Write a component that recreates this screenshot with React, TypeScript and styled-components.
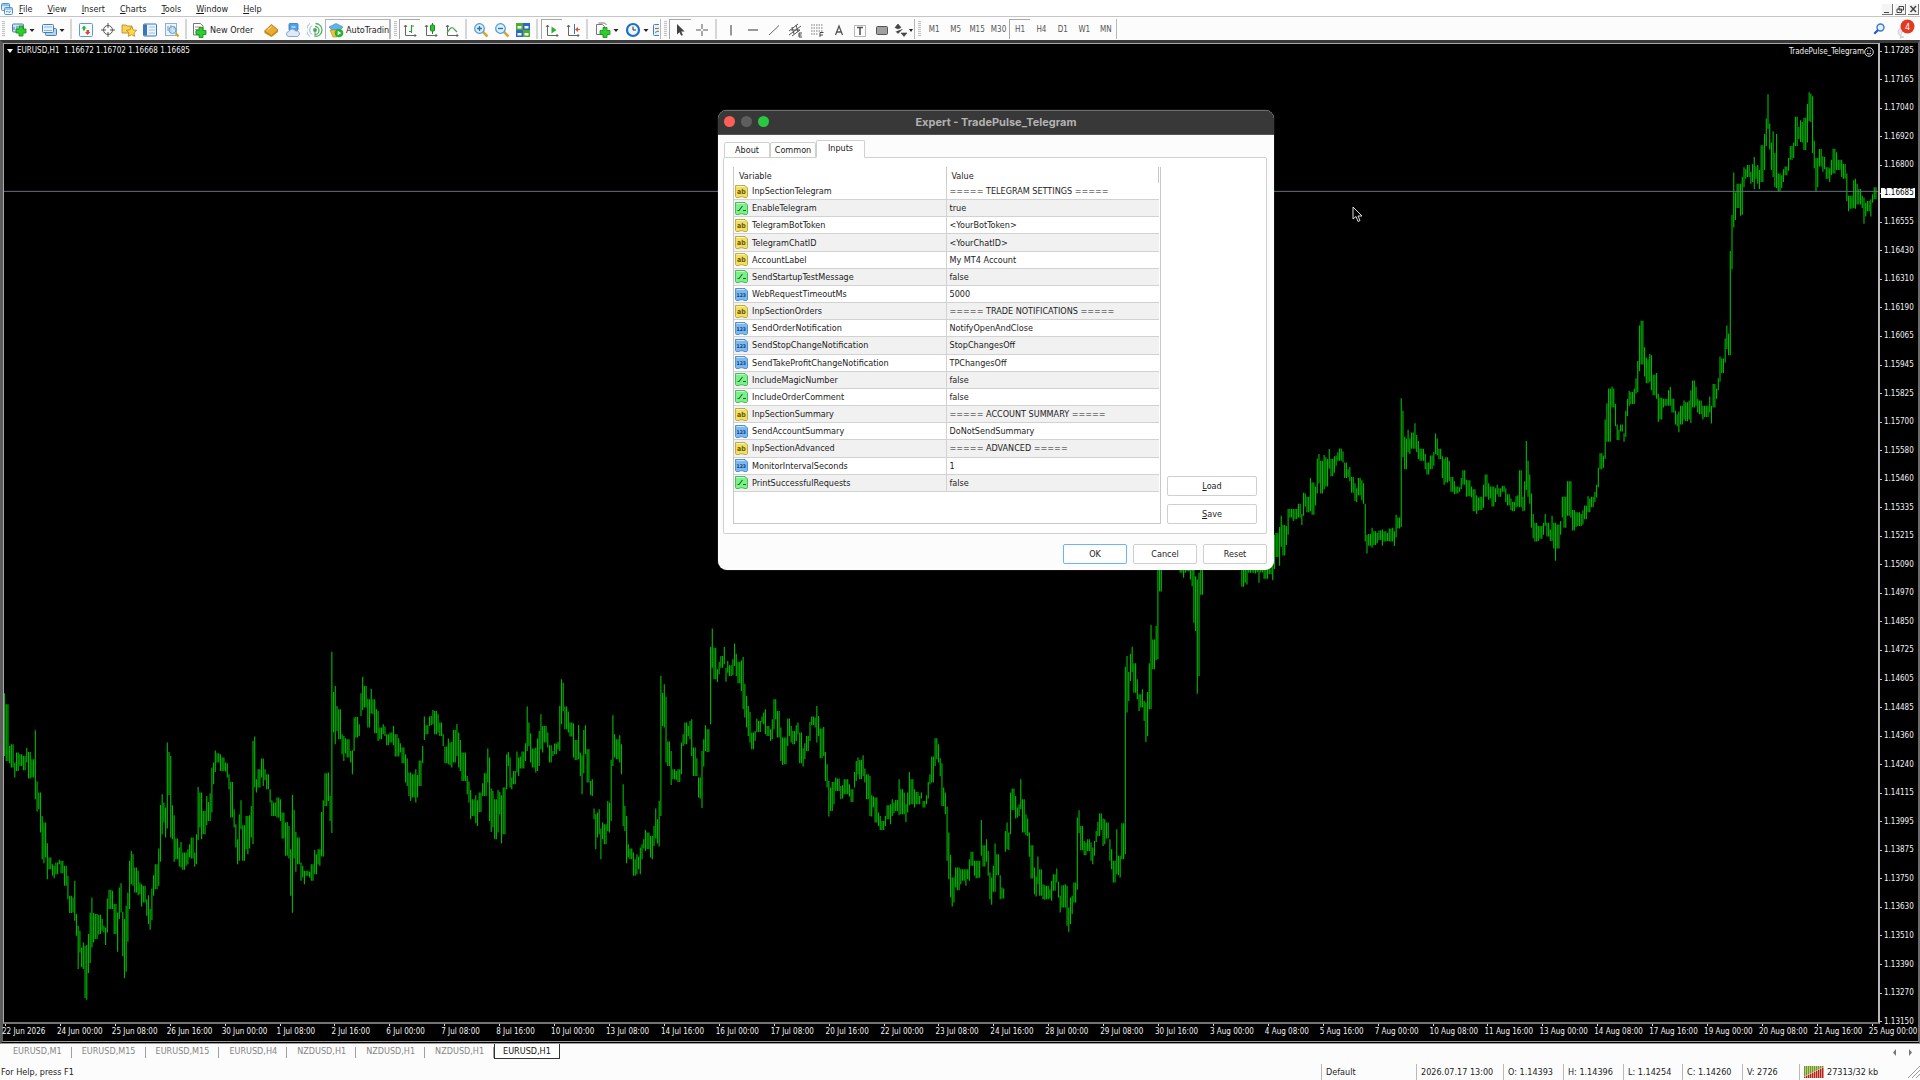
import React from 'react';
import styled, { createGlobalStyle } from 'styled-components';

const uiFont = '"DejaVu Sans Condensed", Tahoma, "DejaVu Sans", sans-serif';

const GlobalStyle = createGlobalStyle`
  *, *::before, *::after { box-sizing: border-box; }
  html, body, #root { height: 100%; }
  body {
    margin: 0;
    overflow: hidden;
    background: #fcfcfc;
    color: #1c1c1c;
    font: 9px/12px ${uiFont};
  }
  button { font: inherit; color: inherit; margin: 0; padding: 0; border: 0; background: none; }
  svg { display: block; }
`;

/* ---------- price series ---------- */

type Block = { x: number; y: number; ux: number; uy: number; bars: string };

// Each block lists "time high low" triples in its own units.
const blocks: Block[] = [
  {
    x: 0, y: 620, ux: 2.45, uy: 3,
    bars: `10 222 410;18 255 425;24 380 432;29 375 445;36 430 475;41 400 455;50 405 440;60 410 453;66 386 430;71 398 478;80 420 475;87 333 540;91 487 577;96 520 570;100 520 640;105 590 720;109 610 732;113 610 715;117 672 780;122 715 750;127 735 770;132 740 777;138 730 765;146 722 735;150 725 762;155 725 762;160 740 800;166 770 840;172 830 882;178 835 880;183 785 905;188 885 950;192 920 1050;197 935 1000;202 985 1045;205 970 1050;210 980 1137;213 978 1142;217 945 1062;222 880 1032;226 835 985;230 882 970;235 885 960;241 887 947;247 887 945;252 900 935;256 920 940;260 925 978;264 838 940;270 812 870;276 815 870;282 855 945;289 880 998;293 805 900;297 792 880;301 878 1012;306 900 1078;309 860 1058;313 820 968;318 725 870;322 695 795;327 705 800;333 745 820;338 755 828;343 790 825;348 795 862;353 800 850;358 840 890;364 828 915;368 870 932;373 808 903;378 768 830;383 735 810;389 688 800;393 557 728;398 525 645;403 550 610;406 565 655;410 370 628;415 398 527;419 410 655;424 558 660;428 588 728;433 658 720;440 685 742;444 668 745;449 700 752;455 700 740;460 690 735;465 675 715;470 655 718;477 700 743;482 645 735;487 503 662;492 520 625;495 560 660;500 575 645;507 530 618;511 548 605;516 522 605;520 445 580;525 430 495;528 394 458;533 402 430;539 405 455;545 415 455;552 430 457;558 432 475;563 465 510;567 488 595;573 570 625;578 615 685;583 660 735;588 585 725;591 543 630;596 618 725;602 590 690;607 590 705;612 588 688;617 560 655;621 365 675;625 352 505;629 480 520;635 450 505;640 418 475;645 418 500;650 450 483;655 465 510;662 510 550;667 543 590;673 550 590;680 535 595;686 540 605;692 580 658;700 610 710;705 608 710;710 620 718;713 690 830;717 527 881;722 572 718;726 638 758;731 655 735;738 730 785;743 740 775;747 755 795;753 755 770;760 758 775;764 735 785;770 692 765;776 705 765;781 690 735;785 690 740;790 578 712;794 543 675;798 462 560;803 460 545;807 530 605;811 505 605;814 97 641;819 218 340;822 200 375;827 260 335;832 270 360;837 345 405;842 350 425;848 357 403;853 360 415;858 395 430;863 393 465;868 295 395;874 293 355;879 315 350;885 222 290;890 172 272;895 200 265;900 238 325;905 240 325;911 208 283;916 240 285;920 270 342;926 275 365;932 325 360;938 315 345;944 322 350;950 345 378;957 340 370;964 320 378;970 345 412;976 357 412;982 372 400;988 385 432;993 405 490;998 418 500;1003 460 530;1007 460 545;1013 465 535;1019 450 550;1025 467 535;1029 424 500;1034 380 432;1040 292 362;1046 318 345;1051 292 320;1057 290 318;1061 272 315;1067 275 345;1074 285 340;1080 310 350;1086 345 380;1092 382 432;1098 358 435;1103 370 438;1108 368 445;1113 332 430;1119 314 410;1124 340 445;1129 362 455;1134 400 485;1140 400 485;1145 470 525;1150 487 550;1154 512 600;1160 540 590;1166 528 612;1171 543 620;1176 520 578;1182 492 530;1188 462 530;1195 388 490;1200 415 605;1205 508 638;1209 515 625;1213 540 660;1221 512 640;1226 518 585;1230 528 672;1235 505 645;1240 405 510;1246 398 440;1251 415 505;1255 475 510;1261 455 495;1266 397 460;1271 415 470;1276 412 448;1281 397 448;1287 372 425;1293 262 395;1297 310 380;1301 342 430;1306 388 445;1311 385 460;1316 358 455;1321 335 440;1326 285 390;1331 320 400;1336 320 370;1342 340 385;1348 378 430;1354 395 410;1360 373 405;1367 368 390;1371 260 395;1377 180 315;1381 190 275;1386 262 330;1393 277 340;1400 310 352;1405 312 415;1411 362 422;1417 317 420;1422 400 470;1427 408 525;1432 332 462;1436 318 405;1441 390 490;1447 485 528;1452 480 530;1456 568 600;1460 585 690;1464 580 655;1469 570 645;1473 628 720;1478 610 660;1482 615 675;1488 545 635;1494 550 640;1499 422 605;1502 288 440;1507 345 415;1512 360 420;1517 348 430;1523 375 465;1528 495 620;1532 560 635;1536 590 732;1541 675 715;1546 688 720;1550 700 745;1554 720 770;1560 705 765;1565 712 750`,
  },
  {
    x: 640, y: 560, ux: 2.45, uy: 3,
    bars: `1 865 945;5 855 900;10 840 868;14 812 875;20 820 870;25 830 895;30 830 900;33 800 860;37 748 838;42 780 853;47 725 862;52 349 770;57 400 500;61 375 505;65 412 610;70 547 620;75 575 665;78 585 677;83 630 660;90 635 662;95 630 668;100 550 645;105 525 560;112 490 555;118 500 530;124 485 540;128 480 590;133 565 650;138 597 650;143 655 715;148 655 718;153 575 746;157 540 622;162 498 575;167 510 578;173 262 495;178 207 325;183 265 360;189 330 368;195 308 345;200 290 325;205 263 315;211 325 367;216 305 340;221 318 350;227 300 348;232 252 320;237 283 350;243 308 372;249 303 395;254 293 450;258 373 475;263 410 505;266 440 530;270 458 550;275 520 570;281 515 545;287 478 518;293 485 518;298 472 490;303 460 495;308 450 525;313 500 530;319 510 545;325 480 540;329 420 510;334 420 480;339 455 535;345 505 605;350 535 617;356 535 615;361 478 560;366 478 530;371 500 550;377 515 555;383 498 545;388 490 525;393 520 612;400 567 622;405 552 600;410 530 575;415 488 545;423 472 497;428 475 505;434 440 550;438 470 530;443 508 597;450 503 590;455 578 665;460 615 685;464 665 772;469 685 755;473 668 735;480 655 695;485 658 695;491 680 720;497 678 718;503 660 705;508 660 705;514 675 712;519 690 728;525 638 685;530 605 665;535 595 645;540 602 660;546 588 650;552 628 670;558 645 720;563 650 770;568 708 772;573 712 745;578 715 790;583 760 800;589 770 812;595 785 812;601 770 800;607 738 780;613 735 795;617 720 770;623 730 762;629 722 755;636 660 768;641 690 765;646 700 765;650 735 788;656 700 760;661 638 738;666 660 735;672 690 745;678 698 735;684 710 735;690 700 718;697 725 745;702 708 735;707 668 718;712 645 675;717 592 670;721 570 620;725 537 600;730 555 610;735 597 650;740 612 740;745 685 740;750 700 765;754 742 905;758 820 960;762 887 1015;766 955 1042;770 955 1030;775 925 985;780 925 993;786 930 975;792 930 965;797 930 980;803 930 960;808 900 965;814 878 920;820 905 950;826 905 957;831 905 955;837 782 890;842 858 922;849 840 908;853 875 950;858 940 1020;863 955 1037;868 920 998;871 853 950;876 885 948;881 948 1020;886 985 1018;892 988 1018;895 815 878;899 790 870;904 820 872;909 700 825;914 688 752;920 710 778;926 745 775;930 735 770;934 660 750;939 720 820;944 765 828;949 778 830;954 820 893;960 858 958;966 925 1005;971 952 1012;976 892 975;981 930 1010;986 975 1020;992 978 1022;998 980 1020;1005 990 1018;1010 965 1025;1015 945 995;1021 928 970;1026 968 1015;1031 1010 1060;1036 978 1045;1042 975 1045;1047 980 1100;1051 1045 1118;1056 1015 1095;1060 1010 1065;1065 970 1030;1070 885 992;1073 775 905;1077 753 822;1082 800 873;1088 845 888;1093 850 888;1098 840 875;1104 850 905;1108 865 915;1114 845 890;1119 815 848;1124 788 830;1128 763 812;1135 778 860;1140 780 855;1145 790 838;1151 840 905;1157 870 930;1161 905 970;1168 810 945;1173 890 948;1178 890 955;1183 792 900;1187 422 885;1191 322 510;1194 290 460;1199 338 425;1203 283 365;1207 262 338;1212 312 400;1217 360 420;1223 405 455;1229 405 445;1233 390 445;1237 425 485;1241 430 548;1245 398 530;1250 312 450;1254 197 355;1258 240 330;1263 200 302;1267 10 300;1271 0 68;1275 0 96;1280 -60 0;1319 -60 0;1325 0 40;1331 0 55;1336 0 40;1342 0 35;1348 0 60;1354 0 80;1358 0 190;1363 50 215;1367 60 403;1371 40 350;1376 0 106;1381 -40 10;1470 -40 10;1476 0 82;1482 0 70;1487 0 75;1492 0 40;1500 0 40;1508 0 42;1514 0 38;1518 0 70`,
  },
  {
    x: 1240, y: 60, ux: 2.306, uy: 2.904,
    bars: `48 1440 1490;60 1440 1508;70 1440 1495;77 1400 1512;81 1380 1480;85 1375 1445;90 1375 1455;93 1358 1470;97 1325 1415;101 1352 1440;106 1355 1410;111 1305 1380;116 1305 1330;122 1305 1340;130 1305 1335;137 1290 1330;142 1320 1352;146 1258 1325;151 1260 1298;156 1270 1315;162 1215 1312;168 1228 1322;174 1240 1295;179 1158 1260;183 1145 1230;188 1165 1260;193 1148 1248;198 1155 1240;203 1160 1240;207 1131 1188;212 1160 1210;218 1152 1200;223 1150 1180;227 1140 1165;231 1129 1165;237 1138 1170;243 1170 1215;249 1190 1212;254 1183 1225;259 1212 1258;265 1230 1282;270 1245 1285;274 1215 1265;280 1222 1280;285 1230 1290;289 1290 1400;294 1380 1435;299 1378 1412;305 1360 1418;310 1370 1410;316 1375 1405;322 1368 1395;328 1365 1412;334 1370 1400;340 1375 1398;346 1362 1400;351 1360 1400;356 1370 1413;361 1322 1388;366 1330 1362;370 1305 1358;373 983 1357;376 1020 1155;380 1095 1190;384 1100 1190;388 1075 1140;392 1100 1145;397 1083 1130;402 1056 1130;407 1090 1140;412 1108 1160;418 1130 1165;423 1130 1165;428 1145 1190;434 1170 1205;440 1150 1190;446 1140 1180;450 1086 1145;455 1100 1150;461 1130 1160;466 1152 1215;472 1160 1235;477 1155 1228;483 1165 1225;488 1212 1255;494 1225 1262;500 1240 1260;506 1242 1255;511 1215 1248;517 1193 1235;523 1220 1270;528 1222 1268;534 1240 1272;540 1248 1312;545 1265 1320;550 1272 1310;556 1270 1308;561 1235 1302;567 1205 1270;573 1230 1278;578 1240 1275;583 1240 1298;589 1245 1285;594 1235 1262;600 1245 1270;607 1238 1255;613 1245 1285;619 1262 1295;625 1275 1308;630 1285 1312;636 1268 1300;641 1265 1298;646 1193 1300;651 1270 1312;656 1225 1310;659 1108 1250;664 1165 1270;669 1205 1290;673 1260 1360;677 1320 1390;682 1345 1400;687 1355 1398;693 1355 1392;699 1345 1380;705 1320 1355;710 1345 1385;716 1365 1398;721 1325 1398;726 1345 1420;728 1370 1456;733 1350 1420;738 1340 1380;744 1270 1330;749 1270 1360;754 1225 1325;759 1225 1325;764 1225 1330;769 1308 1368;774 1315 1358;780 1315 1355;786 1320 1355;792 1310 1350;797 1295 1335;802 1268 1315;807 1275 1315;812 1270 1300;818 1255 1285;823 1235 1272;828 1185 1242;832 1143 1190;838 1150 1185;843 1045 1160;848 998 1110;852 955 1110;856 950 1010;861 955 1010;866 1000 1065;870 1060 1105;875 1075 1105;880 1060 1080;884 1085 1110;889 1020 1095;893 985 1035;898 962 1005;903 965 1000;908 955 1000;913 925 970;918 875 965;922 772 905;927 758 885;932 835 920;937 865 940;942 870 940;946 855 935;950 858 960;955 915 975;960 910 985;965 970 1052;970 982 1045;976 985 1010;982 985 1005;988 960 1005;993 950 1005;998 985 1025;1004 1020 1060;1009 1030 1065;1013 1022 1082;1019 1005 1060;1025 990 1045;1030 995 1050;1036 990 1045;1041 960 1055;1046 932 1010;1051 950 1005;1056 985 1025;1062 990 1030;1068 1005 1045;1074 1005 1038;1080 1005 1038;1085 978 1025;1089 1005 1057;1093 942 1010;1098 955 985;1103 925 960;1108 862 935;1113 868 910;1118 810 880;1124 772 840;1129 795 858;1132 555 835;1136 450 608;1139 327 487;1143 385 465;1148 360 430;1153 360 453;1157 340 450;1161 312 370;1166 318 345;1172 305 340;1177 325 360;1182 303 355;1186 282 375;1190 310 345;1195 305 360;1199 320 375;1204 248 355;1209 215 320;1213 170 250;1217 100 200;1221 185 260;1226 240 320;1231 207 340;1235 270 370;1239 215 372;1243 330 382;1249 335 372;1254 318 355;1260 310 335;1266 285 322;1271 250 290;1277 240 285;1283 165 250;1288 195 230;1294 175 238;1298 180 240;1303 168 262;1307 128 240;1311 94 178;1315 98 180;1319 105 195;1322 150 270;1326 235 315;1330 285 384;1334 285 370;1338 259 310;1343 280 325;1348 282 318;1354 312 345;1360 315 355;1365 290 335;1370 258 330;1376 268 320;1382 290 320;1388 290 340;1394 302 345;1398 330 410;1403 395 440;1409 395 432;1414 350 430;1419 345 432;1424 360 420;1429 375 420;1434 395 430;1438 400 476;1444 415 455;1449 410 440;1454 405 455;1459 390 415;1464 370 405`,
  },
];

const samples = blocks.flatMap((b) =>
  b.bars.split(';').map((t) => {
    const [x, hi, lo] = t.split(' ').map(Number);
    return [b.x + x / b.ux, b.y + hi / b.uy, b.y + lo / b.uy];
  }),
);

const BAR_STEP = 1.7138;

// A bar spans every sample that falls in its step, or takes the nearest one.
const seriesPath = (() => {
  let d = '';
  for (let x = 4.5; x < 1876; x += BAR_STEP) {
    const inside = samples.filter((s) => Math.abs(s[0] - x) <= BAR_STEP / 2);
    const used = inside.length
      ? inside
      : [samples.reduce((a, s) => (Math.abs(s[0] - x) < Math.abs(a[0] - x) ? s : a))];
    const hi = Math.min(...used.map((s) => s[1]));
    const lo = Math.max(...used.map((s) => s[2]));
    d += `M${x.toFixed(2)} ${hi.toFixed(1)}V${lo.toFixed(1)}`;
  }
  return d;
})();

const prices = ['1.17285', '1.17165', '1.17040', '1.16920', '1.16800', '', '1.16555', '1.16430', '1.16310', '1.16190', '1.16065', '1.15945', '1.15825', '1.15700', '1.15580', '1.15460', '1.15335', '1.15215', '1.15090', '1.14970', '1.14850', '1.14725', '1.14605', '1.14485', '1.14360', '1.14240', '1.14115', '1.13995', '1.13875', '1.13750', '1.13630', '1.13510', '1.13390', '1.13270', '1.13150'];

const dates = ['22 Jun 2026', '24 Jun 00:00', '25 Jun 08:00', '26 Jun 16:00', '30 Jun 00:00', '1 Jul 08:00', '2 Jul 16:00', '6 Jul 00:00', '7 Jul 08:00', '8 Jul 16:00', '10 Jul 00:00', '13 Jul 08:00', '14 Jul 16:00', '16 Jul 00:00', '17 Jul 08:00', '20 Jul 16:00', '22 Jul 00:00', '23 Jul 08:00', '24 Jul 16:00', '28 Jul 00:00', '29 Jul 08:00', '30 Jul 16:00', '3 Aug 00:00', '4 Aug 08:00', '5 Aug 16:00', '7 Aug 00:00', '10 Aug 08:00', '11 Aug 16:00', '13 Aug 00:00', '14 Aug 08:00', '17 Aug 16:00', '19 Aug 00:00', '20 Aug 08:00', '21 Aug 16:00', '25 Aug 00:00'];

/* ---------- shell ---------- */

const Shell = styled.div`
  display: flex;
  flex-direction: column;
  height: 100vh;
`;

const MenuBar = styled.nav`
  display: flex;
  align-items: center;
  height: 16px;
  padding: 2px 1px 0;
  flex: none;
  background: #fff;
`;

const MenuList = styled.div`
  display: flex;
  gap: 15px;
  margin-left: 6px;
`;

const MenuItem = styled.button`
  white-space: nowrap;
  line-height: 14px;
`;

const Key = styled.span`
  text-decoration: underline;
`;

const WindowButtons = styled.div`
  display: flex;
  gap: 2px;
  margin-left: auto;
`;

const WindowButton = styled.button`
  width: 11px;
  height: 11px;
  background: #f4f4f4;
  border-right: 1px solid #777;
  border-bottom: 1px solid #777;
`;

const Toolbar = styled.div`
  display: flex;
  align-items: stretch;
  flex: none;
  height: 24px;
  padding: 2px 0 1px 2px;
  border-top: 1px solid #c6c6c6;
`;

const Grip = styled.span`
  flex: none;
  width: 3px;
  margin: 2px 2px 2px 0;
  background: repeating-linear-gradient(#c4c4c4 0 1px, #f4f4f4 1px 2px);
`;

const Divider = styled.span`
  flex: none;
  width: 2px;
  margin: 0 3px;
  background: #d6d6d6;
`;

const Edge = styled.span`
  flex: none;
  width: 1px;
  margin-right: 3px;
  background: #b8b8b8;
`;

const ToolGroup = styled.div<{ $w: number }>`
  display: flex;
  flex: none;
  width: ${(p) => p.$w}px;
`;

const Tool = styled.button<{ $on?: boolean }>`
  display: flex;
  flex: 1 1 0;
  min-width: 0;
  align-items: center;
  justify-content: center;
  color: #555;
  font-size: 8px;
  border-left: 1px solid ${(p) => (p.$on ? '#a8a8a8' : 'transparent')};
  border-top: 1px solid ${(p) => (p.$on ? '#a8a8a8' : 'transparent')};
  overflow: hidden;
`;

const LabelTool = styled.button<{ $w: number; $boxed?: boolean }>`
  display: flex;
  flex: none;
  align-items: center;
  gap: ${(p) => (p.$boxed ? 2 : 3)}px;
  width: ${(p) => p.$w}px;
  padding-left: ${(p) => (p.$boxed ? 2 : 0)}px;
  overflow: hidden;
  white-space: nowrap;
  border: 1px solid ${(p) => (p.$boxed ? '#b4b4b4' : 'transparent')};
  border-bottom: 0;
  svg { flex: none; }
`;

const Spacer = styled.span`
  flex: 1;
`;

const ToolbarEnd = styled.div`
  display: flex;
  align-items: center;
  gap: 10px;
  padding-right: 5px;
`;

/* ---------- chart ---------- */

const ChartWindow = styled.main`
  display: grid;
  flex: 1;
  min-height: 0;
  grid-template-columns: minmax(0, 1fr) 38px;
  grid-template-rows: minmax(0, 1fr) 17px;
  border: 2px solid #6b6b6b;
  border-left: 3px solid #5c5c5c;
  border-top: 3px solid #3a3a3a;
  border-bottom: 3px double #9a9a9a;
  background: #000;
  color: #f2f2f2;
  font-size: 8px;
  line-height: 10px;
`;

const Plot = styled.section`
  position: relative;
  min-width: 0;
  border: 1px solid #a8a8a8;
  border-right: 2px solid #b8b8b8;
  border-bottom: 2px solid #747474;
  svg.series { width: 100%; height: 100%; }
`;

const PlotTitle = styled.div`
  position: absolute;
  top: 2px;
  left: 3px;
  display: flex;
  align-items: center;
  gap: 4px;
  white-space: pre;
`;

const ExpertLabel = styled.div`
  position: absolute;
  top: 3px;
  right: 4px;
  display: flex;
  align-items: center;
`;

const PriceAxis = styled.div`
  display: flex;
  flex-direction: column;
  justify-content: space-between;
  grid-row: 1 / span 2;
  grid-column: 2;
  position: relative;
  padding: 3px 0 14px;
`;

const Price = styled.div`
  display: flex;
  align-items: center;
  gap: 2px;
  height: 10px;
  &::before { content: ''; width: 2px; height: 1px; background: #ccc; }
`;

const CurrentPrice = styled.output`
  position: absolute;
  top: 15%;
  left: 1px;
  width: 34px;
  margin-top: -5px;
  padding-left: 3px;
  background: #fff;
  color: #000;
`;

const TimeAxis = styled.div`
  display: flex;
  grid-row: 2;
  grid-column: 1 / span 2;
  margin-left: 1px;
`;

const TimeMark = styled.span`
  position: relative;
  flex: 1 1 0;
  width: 0;
  padding-top: 3px;
  white-space: nowrap;
  text-indent: -2px;
  &:last-child { flex: 0 0 47px; }
  &::before { content: ''; position: absolute; left: 1px; top: 0; width: 1px; height: 2px; background: #ddd; }
`;

const ChartTabs = styled.div`
  display: flex;
  flex: none;
  height: 17px;
  padding: 0 6px 0 3px;
  color: #858585;
`;

const ChartTab = styled.button<{ $on?: boolean }>`
  height: 15px;
  padding: 0 ${(p) => (p.$on ? 8 : 10)}px 1px;
  white-space: nowrap;
  ${(p) =>
    p.$on
      ? 'color:#111;background:#fff;border:1px solid #333;border-top:0;'
      : 'background:linear-gradient(#a0a0a0,#a0a0a0) right 3px / 1px 11px no-repeat;'}
`;

const Scrollers = styled.div`
  display: flex;
  align-items: center;
  gap: 8px;
  margin-left: auto;
`;

const StatusBar = styled.footer`
  display: flex;
  align-items: center;
  flex: none;
  height: 19px;
  padding: 2px 0 0 1px;
`;

const Help = styled.span`
  flex: 1;
`;

const StatusCell = styled.span<{ $w: number }>`
  display: flex;
  align-items: center;
  gap: 3px;
  width: ${(p) => p.$w}px;
  height: 16px;
  padding-left: 4px;
  border-left: 1px solid #b8b8b8;
  white-space: nowrap;
`;

/* ---------- dialog ---------- */

const Dialog = styled.section`
  position: absolute;
  top: 110px;
  left: 718px;
  display: flex;
  flex-direction: column;
  width: 556px;
  height: 460px;
  border-radius: 9px;
  overflow: hidden;
  background: #fcfcfc;
  box-shadow: 0 0 1px #aaa;
  line-height: 14px;
`;

const TitleBar = styled.header`
  display: grid;
  grid-template-columns: 60px 1fr 60px;
  align-items: center;
  flex: none;
  height: 25px;
  padding-bottom: 2px;
  background: #383838;
  border-top: 1px solid #6e6e6e;
  border-bottom: 1px solid #555;
`;

const Lights = styled.div`
  display: flex;
  gap: 6px;
  padding-left: 6px;
`;

const Light = styled.button<{ $c: string }>`
  width: 11px;
  height: 11px;
  border-radius: 50%;
  background: ${(p) => p.$c};
`;

const DialogTitle = styled.h1`
  margin: 0;
  text-align: center;
  font: 700 11px/14px Inter, "Liberation Sans", sans-serif;
  color: #b2b2b2;
`;

const TabRow = styled.div`
  display: flex;
  align-items: flex-end;
  height: 23px;
  padding: 0 6px;
  margin-bottom: -1px;
  position: relative;
`;

const Tab = styled.button<{ $on?: boolean; $w: number }>`
  width: ${(p) => p.$w}px;
  height: ${(p) => (p.$on ? 18 : 16)}px;
  padding-bottom: ${(p) => (p.$on ? 2 : 0)}px;
  background: #fff;
  border: 1px solid #d0d0d0;
  border-bottom-color: ${(p) => (p.$on ? '#fff' : '#d0d0d0')};
  border-radius: 2px 2px 0 0;
`;

const Panel = styled.div`
  display: flex;
  flex: 1;
  gap: 6px;
  margin: 0 7px 0 5px;
  padding: 9px;
  background: #fff;
  border: 1px solid #d0d0d0;
  border-radius: 2px;
`;

const TableBox = styled.div`
  flex: 1;
  border: 1px solid #c8c8c8;
  border-top: 0;
`;

const Inputs = styled.table`
  width: calc(100% - 1px);
  height: 325px;
  table-layout: fixed;
  border-collapse: separate;
  border-spacing: 0;
  th, td { padding: 0; text-align: left; font-weight: 400; white-space: nowrap; }
  thead th { height: 16px; padding: 1px 0 0 5px; border-right: 1px solid #c8c8c8; }
  tbody th, tbody td { border-bottom: 1px solid #d2d2d2; }
  tbody th { border-right: 1px solid #d2d2d2; }
  tbody td { padding-left: 3px; }
  tbody tr:nth-child(even) { background: #f1f1f1; }
`;

const Name = styled.span`
  display: flex;
  align-items: center;
  gap: 4px;
  height: 16px;
  padding-left: 1px;
`;

const SideButtons = styled.div`
  display: flex;
  flex-direction: column;
  justify-content: flex-end;
  gap: 8px;
  width: 90px;
`;

const Push = styled.button<{ $main?: boolean }>`
  width: 100%;
  height: 20px;
  background: #fff;
  border: 1px solid ${(p) => (p.$main ? '#6ab4ff' : '#cfcfcf')};
  border-radius: 2px;
`;

const Actions = styled.div`
  display: grid;
  grid-template-columns: repeat(3, 64px);
  justify-content: end;
  gap: 6px;
  padding: 10px 7px 6px;
`;

const Pointer = styled.svg`
  position: absolute;
  top: 206px;
  left: 1352px;
`;

/* ---------- icons ---------- */

const I = ({ children, w = 16 }: { children: React.ReactNode; w?: number }) => (
  <svg width={w} height="16" viewBox={`0 0 ${w} 16`} fill="none" aria-hidden="true">{children}</svg>
);
const Caret = () => <path d="M18.500 7h5l-2.500 3z" fill="#222" />;
const Plus = ({ x = 8, y = 5 }) => (
  <path transform={`translate(${x} ${y})`} d="M3 0h4v3h3v4H7v3H3V7H0V3h3z" fill="#2fce2f" stroke="#128a18" strokeWidth=".8" />
);

const NewChart = () => (
  <I w={24}><rect x="1.500" y="2" width="11" height="8" rx="1" fill="#cfe3f7" stroke="#4a7fb5" /><path d="M3 8V5m3 3V4" stroke="#4a7fb5" /><Plus x={5} y={4} /><Caret /></I>
);
const Profiles = () => (
  <I w={24}><rect x="4.500" y="6.500" width="11" height="7" rx="1" fill="#b8d4ee" stroke="#4a7fb5" /><rect x="1.500" y="2.500" width="11" height="8" rx="1" fill="#e6f1fb" stroke="#4a7fb5" /><path d="M3 8.500h8M3 5h8" stroke="#8ab4dc" /><Caret /></I>
);
const MarketWatch = () => (
  <I><rect x="1.500" y="1.500" width="13" height="13" rx="1" fill="#f4faff" stroke="#5d9bd6" /><path d="M6 3.500 8.500 6.500H7v2H5v-2H3.500z" fill="#2fb52f" /><path d="M9.500 13 12.500 10H11V8H8.500v2H7z" fill="#e0462c" /></I>
);
const Cross = () => (
  <I><circle cx="8" cy="8" r="4.500" stroke="#555" /><path d="M8 1v5M8 10v5M1 8h5M10 8h5" stroke="#555" /></I>
);
const Favs = () => (
  <I><path d="M1 3h4l1 1h5v7H1z" fill="#f6d25a" stroke="#b9861a" strokeWidth=".8" /><path d="m10.500 4.500 1.600 3.300 3.600.5-2.600 2.500.6 3.600-3.200-1.700-3.200 1.700.6-3.600-2.600-2.500 3.600-.5z" fill="#ffd94a" stroke="#b9861a" strokeWidth=".8" /></I>
);
const DataWin = () => (
  <I><rect x="1.500" y="2" width="13" height="12" rx="1" fill="#eaf4fe" stroke="#3b77b7" /><path d="M2 2.500h3v11H2z" fill="#3b77b7" /><path d="M7 5h6M7 8h6M7 11h6" stroke="#9cc3e8" /></I>
);
const Tester = () => (
  <I><rect x="1.500" y="1.500" width="11" height="12" fill="#eef4fa" stroke="#8eb0d0" /><path d="M4 9V4m3 6V3m3 5V4" stroke="#7a9ab8" /><circle cx="8.500" cy="8" r="3.500" fill="#bfe0f8" fillOpacity=".7" stroke="#5d9bd6" /><path d="m11.500 11 3 3.500" stroke="#d6a020" strokeWidth="2" /></I>
);
const OrderIcon = () => (
  <I><path d="M2.500 1.500h7l2.500 2.500v9h-9.500z" fill="#fff" stroke="#777" /><path d="M4 5h6M4 7.500h6M4 10h3" stroke="#999" /><Plus x={5} y={5.5} /></I>
);
const Book = () => (
  <I><path d="m1.500 9 7-6.500L15 8l-6.500 5.500z" fill="#e9ad32" stroke="#a56f10" strokeWidth=".8" /><path d="m1.500 9 7 4.500L15 8v2l-6.500 5-7-4z" fill="#c98a1c" /><path d="m4.500 8 4-3.500" stroke="#ffe39a" /></I>
);
const Cloud = () => (
  <I><rect x="4" y="1.500" width="9" height="7" rx="1" fill="#4aa3ea" stroke="#2d76bd" strokeWidth=".8" /><path d="M6.500 5h4" stroke="#fff" /><path d="M4 14.500a2.500 2.500 0 0 1 0-5 3.500 3.500 0 0 1 6.500-.5 2.800 2.800 0 0 1 2 5.500z" fill="#dfeaf6" stroke="#6f97c4" strokeWidth=".8" /></I>
);
const Signal = () => (
  <I><path d="M5 12.500a5.500 5.500 0 0 1 0-9M3 14.500a8 8 0 0 1 0-13" stroke="#8fb3cf" /><path d="M8 4.500a4 4 0 0 1 0 8M8.500 1.500a6.500 6.500 0 0 1 0 13" stroke="#58b26a" strokeWidth="1.300" /><circle cx="8" cy="8" r="2" fill="#4da860" /><path d="M8 8v7" stroke="#4da860" /></I>
);
const Auto = () => (
  <I><path d="m1 5 7-3.500L15 5l-3 3H4z" fill="#63b3ea" stroke="#2f7fb8" strokeWidth=".6" /><path d="M2 8h10l-3 7H5z" fill="#f0c23c" stroke="#b88712" strokeWidth=".6" /><circle cx="11" cy="11" r="4.300" fill="#25b32b" /><path d="m9.700 8.800 3.600 2.200-3.600 2.200z" fill="#fff" /></I>
);
const axes = <path d="M3.500 3v10.500H14M2 5l1.500-2L5 5m7.500 7 1.500 1.500-1.500 1.500" stroke="#666" />;
const BarsIcon = () => <I>{axes}<path d="M9.500 3v8M7 9.500h2.500M9.500 4H12" stroke="#2f9c3a" strokeWidth="1.200" /></I>;
const Candles = () => <I>{axes}<path d="M9.500 1v11" stroke="#178a22" /><rect x="7.500" y="3" width="4" height="6" rx="1" fill="#2fc33a" stroke="#178a22" /></I>;
const LineIcon = () => <I>{axes}<path d="M3 11c3-5 5-7 7-4l3 3" stroke="#4aa552" strokeWidth="1.200" /></I>;
const Zoom = ({ plus }: { plus?: boolean }) => (
  <I><path d="m10 10 4.500 4.500" stroke="#d6a83a" strokeWidth="2.500" /><circle cx="6.500" cy="6.500" r="4.800" fill="#d8effc" stroke="#4f97cf" strokeWidth="1.200" /><path d={plus ? 'M4 6.500h5M6.500 4v5' : 'M4 6.500h5'} stroke="#2f6fae" strokeWidth="1.300" /></I>
);
const Tiles = () => (
  <I><rect x="1" y="1" width="7" height="7" fill="#4fae24" /><rect x="8" y="1" width="7" height="7" fill="#2f66c8" /><rect x="1" y="8" width="7" height="7" fill="#2f66c8" /><rect x="8" y="8" width="7" height="7" fill="#4fae24" /><path d="M2.500 4h4v2.500h-4zM9.500 4h4v2.500h-4zM2.500 11h4v2.500h-4zM9.500 11h4v2.500h-4z" fill="#eef6ff" /></I>
);
const Scroll = () => <I>{axes}<path d="m7.500 4.500 5 3.500-5 3.500z" fill="#27b234" /></I>;
const Shift = () => <I>{axes}<path d="M9.500 2v10" stroke="#3d74a8" /><path d="m10 7.500 3-2.500v5zM13 7h2v1h-2z" fill="#e0532d" /></I>;
const Indicators = () => <I w={24}><path d="M1.500 2.500h6l2 2v8h-8zM3.500 1h6l2 2" fill="#fff" stroke="#777" /><Plus x={5} y={5.5} /><Caret /></I>;
const Clock = () => <I w={24}><circle cx="8" cy="8" r="6" fill="#eaf5ff" stroke="#1d6fc2" strokeWidth="2.200" /><path d="M8 4.500V8h3" stroke="#333" /><Caret /></I>;
const Template = () => <I><rect x="1.500" y="2.500" width="12" height="11" rx="1" fill="#e6f1fb" stroke="#3f84c8" /><path d="M3 6.500h3l2-1" stroke="#d2502f" /><path d="M3 10.500 6 9l2 1" stroke="#2f9c3a" /></I>;
const Arrow = () => <I><path d="M5 2v10.500l2.500-2.300 1.700 3.600 1.700-.8L9.300 9.500h3.400z" fill="#444" /></I>;
const Plusline = () => <I><path d="M8 2v5M8 9v5M2 8h5M9 8h5" stroke="#555" /></I>;
const VLine = () => <I><path d="M8 3v10.500" stroke="#555" strokeWidth="1.200" /></I>;
const HLine = () => <I><path d="M3 8h10" stroke="#555" strokeWidth="1.200" /></I>;
const Trend = () => <I><path d="M3 13 13 3.500" stroke="#666" /></I>;
const Channel = () => <I><path d="m1 9 9-7M1 13l12-9M4 14l8-6M4 5l2 7m2-9 2 7M3 8h9" stroke="#555" /><path d="M14 11h-3v4h3m-3-2h2.500" stroke="#444" /></I>;
const Fib = () => <I><path d="M2 3h12M2 6h12M2 9h12M2 12h7" stroke="#777" strokeDasharray="1.500 1" /><path d="M11 15v-4.500h3.500M11 13h3" stroke="#444" /></I>;
const TextA = () => <I><path d="m4.500 13 3.500-9 3.500 9M6 10h4" stroke="#555" strokeWidth="1.300" /></I>;
const TextT = () => <I><rect x="2.500" y="3.500" width="11" height="11" stroke="#777" strokeDasharray="1 1" /><path d="M5 5.500h6M8 5.500V13" stroke="#555" strokeWidth="1.600" /></I>;
const Rect = () => <I><rect x="2.500" y="4.500" width="11" height="8" rx="1" fill="#a0a0a0" stroke="#555" /></I>;
const Arrows = () => <I w={20}><path d="M2 5.500 5 2l3 3.500-3 1.500zM3 9.500l2 2L9.500 7M8 11h6l-3 3.500z" fill="#444" stroke="#444" strokeWidth=".6" /><path d="M16 7h4l-2 3z" fill="#222" /></I>;

type Kind = 's' | 'b' | 'n';
const kindStyle = {
  s: { fill: '#f0df67', edge: '#b39c2b', ink: '#6c5a00', text: 'ab', size: 7 },
  b: { fill: '#7df08b', edge: '#35a846', ink: '#13701f', text: '', size: 6 },
  n: { fill: '#7db8ee', edge: '#3b7fc0', ink: '#0d3f78', text: '123', size: 5 },
};
const KindIcon = ({ kind }: { kind: Kind }) => {
  const k = kindStyle[kind];
  return (
    <svg width="13" height="13" viewBox="0 0 13 13" aria-hidden="true">
      <path d="M.5.500h9.500L12.500 3v8.500l-.7 1H9l-1-.7H5l-1 .7H1.200l-.7-1z" fill={k.fill} stroke={k.edge} strokeWidth=".8" />
      <path d="M1.500 1.500H9.500" stroke="#fff" strokeOpacity=".6" />
      {k.text ? (
        <text x="6.300" y="8.500" fontSize={k.size} fontWeight="700" textAnchor="middle" fill={k.ink}>{k.text}</text>
      ) : (
        <path d="M2.500 8.500h1.500l3.500-4.500M8 8.500h3" fill="none" stroke={k.ink} strokeWidth="1.100" />
      )}
    </svg>
  );
};

const rows: [Kind, string, string][] = [
  ['s', 'InpSectionTelegram', '===== TELEGRAM SETTINGS ====='],
  ['b', 'EnableTelegram', 'true'],
  ['s', 'TelegramBotToken', '<YourBotToken>'],
  ['s', 'TelegramChatID', '<YourChatID>'],
  ['s', 'AccountLabel', 'My MT4 Account'],
  ['b', 'SendStartupTestMessage', 'false'],
  ['n', 'WebRequestTimeoutMs', '5000'],
  ['s', 'InpSectionOrders', '===== TRADE NOTIFICATIONS ====='],
  ['n', 'SendOrderNotification', 'NotifyOpenAndClose'],
  ['n', 'SendStopChangeNotification', 'StopChangesOff'],
  ['n', 'SendTakeProfitChangeNotification', 'TPChangesOff'],
  ['b', 'IncludeMagicNumber', 'false'],
  ['b', 'IncludeOrderComment', 'false'],
  ['s', 'InpSectionSummary', '===== ACCOUNT SUMMARY ====='],
  ['n', 'SendAccountSummary', 'DoNotSendSummary'],
  ['s', 'InpSectionAdvanced', '===== ADVANCED ====='],
  ['n', 'MonitorIntervalSeconds', '1'],
  ['b', 'PrintSuccessfulRequests', 'false'],
];

const menus = ['File', 'View', 'Insert', 'Charts', 'Tools', 'Window', 'Help'];
const periods = ['M1', 'M5', 'M15', 'M30', 'H1', 'H4', 'D1', 'W1', 'MN'];
const chartTabs = ['EURUSD,M1', 'EURUSD,M15', 'EURUSD,M15', 'EURUSD,H4', 'NZDUSD,H1', 'NZDUSD,H1', 'NZDUSD,H1', 'EURUSD,H1'];

const ZoomIn = () => <Zoom plus />;
const ZoomOut = () => <Zoom />;

const tools = (icons: React.ComponentType[], on = -1) =>
  icons.map((Icon, i) => <Tool key={i} $on={i === on}><Icon /></Tool>);

export default function App() {
  return (
    <Shell>
      <GlobalStyle />
      <MenuBar>
        <svg width="12" height="12" viewBox="0 0 12 12" fill="none" aria-hidden="true">
          <rect x=".5" y=".5" width="8" height="7" rx="1" fill="#d9ebfb" stroke="#4f93d2" />
          <rect x="3.500" y="4.500" width="8" height="7" rx="1" fill="#eef7ff" stroke="#4f93d2" />
          <path d="M1 2h7M4 6h7M5 9l1.500-1L8 9.500 10 8" stroke="#4f93d2" />
        </svg>
        <MenuList>
          {menus.map((m) => <MenuItem key={m}><Key>{m[0]}</Key>{m.slice(1)}</MenuItem>)}
        </MenuList>
        <WindowButtons>
          {['M2 8.500h5', 'M4 2.500h4.500V6H4zM2 5h4.500v3.500H2z', 'm2.500 2 5.500 6m0-6-5.500 6'].map((d) => (
            <WindowButton key={d} aria-label="window control">
              <svg width="10" height="10" viewBox="0 0 10 10" fill="none"><path d={d} stroke="#444" strokeWidth={d[0] === 'm' ? 1.5 : 1} /></svg>
            </WindowButton>
          ))}
        </WindowButtons>
      </MenuBar>

      <Toolbar>
        <Grip />
        <ToolGroup $w={60}>{tools([NewChart, Profiles])}</ToolGroup>
        <Divider />
        <ToolGroup $w={107}>{tools([MarketWatch, Cross, Favs, DataWin, Tester])}</ToolGroup>
        <Divider />
        <LabelTool $w={69}><OrderIcon />New Order</LabelTool>
        <ToolGroup $w={66}>{tools([Book, Cloud, Signal])}</ToolGroup>
        <LabelTool $w={65} $boxed><Auto />AutoTrading</LabelTool>
        <Edge />
        <Grip />
        <ToolGroup $w={63}>{tools([BarsIcon, Candles, LineIcon], 0)}</ToolGroup>
        <Divider />
        <ToolGroup $w={63}>{tools([ZoomIn, ZoomOut, Tiles])}</ToolGroup>
        <Divider />
        <ToolGroup $w={42}>{tools([Scroll, Shift], 0)}</ToolGroup>
        <Divider />
        <ToolGroup $w={60}>{tools([Indicators, Clock])}</ToolGroup>
        <LabelTool $w={9}><Template /></LabelTool>
        <Edge />
        <Grip />
        <ToolGroup $w={43}>{tools([Arrow, Plusline], 0)}</ToolGroup>
        <Divider />
        <ToolGroup $w={172}>{tools([VLine, HLine, Trend, Channel, Fib, TextA, TextT, Rect])}</ToolGroup>
        <LabelTool $w={22}><Arrows /></LabelTool>
        <Edge />
        <Grip />
        <ToolGroup $w={193}>
          {periods.map((p) => <Tool key={p} $on={p === 'H1'}>{p}</Tool>)}
        </ToolGroup>
        <Edge />
        <Spacer />
        <ToolbarEnd>
          <svg width="12" height="12" viewBox="0 0 12 12" fill="none" aria-hidden="true">
            <circle cx="7.500" cy="4.500" r="3.500" fill="#e4f0ff" stroke="#3b78d8" strokeWidth="1.400" />
            <path d="M5 7 1.300 10.700" stroke="#2459c4" strokeWidth="2.200" />
          </svg>
          <svg width="20" height="20" viewBox="0 0 20 20" aria-hidden="true">
            <path d="M9 8a6 5 0 1 0 0 10l-4 1 1-3z" fill="#e6e6ee" stroke="#c4c4cc" strokeWidth=".7" />
            <circle cx="12.500" cy="7.500" r="7" fill="#e23a22" />
            <text x="12.500" y="11" fontSize="9" textAnchor="middle" fill="#fff">4</text>
          </svg>
        </ToolbarEnd>
      </Toolbar>

      <ChartWindow>
        <Plot>
          <svg className="series" viewBox="4 44 1874 979" preserveAspectRatio="none" fill="none" aria-hidden="true">
            <path d={seriesPath} stroke="#00b400" strokeWidth="1.150" />
            <path d="M4 191.500H1878" stroke="#63727f" />
          </svg>
          <PlotTitle>
            <svg width="6" height="4" viewBox="0 0 6 4" aria-hidden="true"><path d="M0 0h6L3 4z" fill="#fff" /></svg>
            {'EURUSD,H1  1.16672 1.16702 1.16668 1.16685'}
          </PlotTitle>
          <ExpertLabel>
            TradePulse_Telegram
            <svg width="10" height="10" viewBox="0 0 10 10" fill="none" aria-hidden="true">
              <circle cx="5" cy="5" r="4.300" stroke="#ddd" /><path d="M3 4h1M6 4h1M3 6.300q2 1.500 4 0" stroke="#ddd" />
            </svg>
          </ExpertLabel>
        </Plot>
        <PriceAxis>
          {prices.map((p, i) => <Price key={i}>{p}</Price>)}
          <CurrentPrice>1.16685</CurrentPrice>
        </PriceAxis>
        <TimeAxis>{dates.map((d) => <TimeMark key={d}>{d}</TimeMark>)}</TimeAxis>
      </ChartWindow>

      <ChartTabs>
        {chartTabs.map((t, i) => <ChartTab key={i} $on={i === 7}>{t}</ChartTab>)}
        <Scrollers>
          <svg width="22" height="7" viewBox="0 0 22 7" fill="#777" aria-hidden="true"><path d="M4 0v7L1 3.500zM17 0v7l3-3.500z" /></svg>
        </Scrollers>
      </ChartTabs>
      <StatusBar>
        <Help>For Help, press F1</Help>
        <StatusCell $w={95}>Default</StatusCell>
        <StatusCell $w={87}>2026.07.17 13:00</StatusCell>
        <StatusCell $w={60}>O: 1.14393</StatusCell>
        <StatusCell $w={60}>H: 1.14396</StatusCell>
        <StatusCell $w={59}>L: 1.14254</StatusCell>
        <StatusCell $w={60}>C: 1.14260</StatusCell>
        <StatusCell $w={57}>V: 2726</StatusCell>
        <StatusCell $w={109}>
          <svg width="20" height="12" viewBox="0 0 20 12" aria-hidden="true">
            {Array.from({ length: 10 }, (_, i) => (
              <React.Fragment key={i}>
                <rect x={i * 2} y="0" width="1.500" height={10 - i} fill="#6f9a1e" />
                <rect x={i * 2} y={10.5 - i} width="1.500" height={1.5 + i} fill="#b3261a" />
              </React.Fragment>
            ))}
          </svg>
          27313/32 kb
        </StatusCell>
        <svg width="12" height="12" viewBox="0 0 12 12" stroke="#999" aria-hidden="true"><path d="M0 12 12 0M4 12l8-8M8 12l4-4" /></svg>
      </StatusBar>

      <Pointer width="12" height="17" viewBox="0 0 12 17" aria-hidden="true">
        <path d="M1 1v12l3-2.500 2 5 2-1-2-4.500h4z" fill="#000" stroke="#ddd" />
      </Pointer>

      <Dialog role="dialog" aria-labelledby="expert-title">
        <TitleBar>
          <Lights>
            <Light $c="#ff5f57" aria-label="Close" />
            <Light $c="#5e5e5e" aria-label="Minimize" />
            <Light $c="#28c840" aria-label="Zoom" />
          </Lights>
          <DialogTitle id="expert-title">Expert - TradePulse_Telegram</DialogTitle>
        </TitleBar>
        <TabRow role="tablist">
          <Tab role="tab" $w={46}>About</Tab>
          <Tab role="tab" $w={46}>Common</Tab>
          <Tab role="tab" $w={49} $on>Inputs</Tab>
        </TabRow>
        <Panel>
          <TableBox>
            <Inputs>
              <colgroup><col width="50%" /><col /></colgroup>
              <thead><tr><th scope="col">Variable</th><th scope="col">Value</th></tr></thead>
              <tbody>
                {rows.map(([kind, name, value]) => (
                  <tr key={name}>
                    <th scope="row"><Name><KindIcon kind={kind} />{name}</Name></th>
                    <td>{value}</td>
                  </tr>
                ))}
              </tbody>
            </Inputs>
          </TableBox>
          <SideButtons>
            <Push><Key>L</Key>oad</Push>
            <Push><Key>S</Key>ave</Push>
          </SideButtons>
        </Panel>
        <Actions>
          <Push $main>OK</Push>
          <Push>Cancel</Push>
          <Push>Reset</Push>
        </Actions>
      </Dialog>
    </Shell>
  );
}
